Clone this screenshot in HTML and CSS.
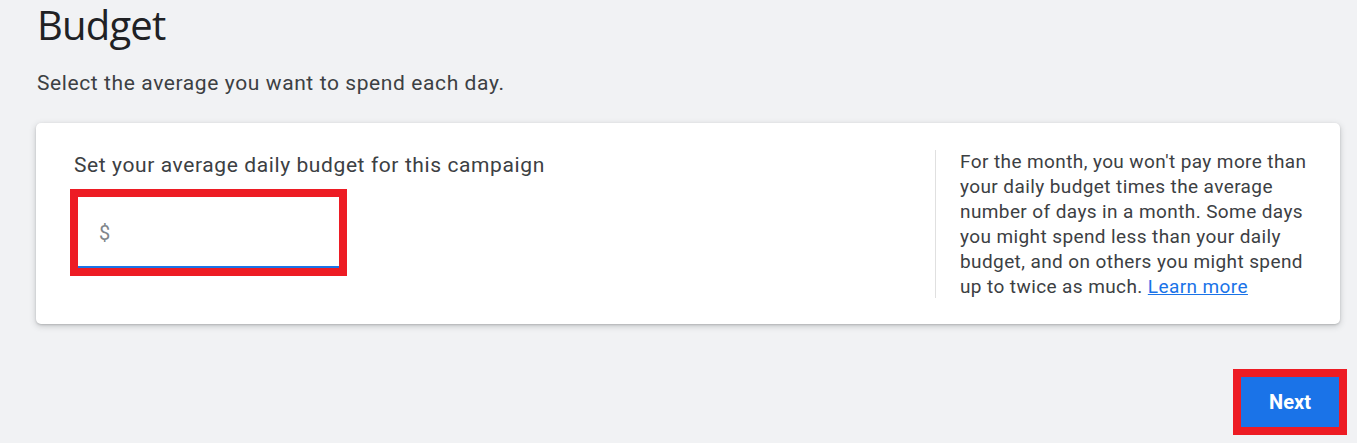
FILE: index.html
```html
<!DOCTYPE html>
<html>
<head>
<meta charset="utf-8">
<link rel="stylesheet" href="styles.css">
</head>
<body>
<main class="page">
  <h1 class="title">Budget</h1>
  <p class="subtitle">Select the average you want to spend each day.</p>
  <section class="card">
    <div class="card-main">
      <div class="field-label">Set your average daily budget for this campaign</div>
      <div class="highlight">
        <div class="money-input">
          <span class="currency">$</span>
        </div>
      </div>
    </div>
    <div class="card-side">
      <div class="divider"></div>
      <p class="help">For the month, you won't pay more than your daily budget times the average number of days in a month. Some days you might spend less than your daily budget, and on others you might spend up to twice as much. <a class="link" href="#">Learn more</a></p>
    </div>
  </section>
  <div class="actions">
    <div class="highlight btn-highlight">
      <button class="next-btn">Next</button>
    </div>
  </div>
</main>
</body>
</html>
```

FILE: styles.css
```css
html, body {
  margin: 0;
  padding: 0;
  background: #f1f2f4;
  font-family: Roboto, "Noto Sans", "Liberation Sans", sans-serif;
  color: #3c4043;
}
.page {
  width: 1357px;
  height: 443px;
  overflow: hidden;
  box-sizing: border-box;
  padding: 2px 17px 0 36px;
}
.title {
  margin: 0 0 0 1px;
  font-family: "Open Sans", Roboto, sans-serif;
  font-weight: 400;
  font-size: 40px;
  line-height: 46px;
  color: #202124;
  letter-spacing: -0.8px;
}
.subtitle {
  margin: 21px 0 0 1px;
  font-size: 21px;
  line-height: 28px;
  letter-spacing: 0.6px;
  color: #3c4043;
}
.card {
  margin-top: 26px;
  width: 1304px;
  height: 201px;
  box-sizing: border-box;
  background: #fff;
  border-radius: 5px;
  box-shadow: 0 2px 6px rgba(60, 64, 67, 0.25), 0 1px 2px rgba(60, 64, 67, 0.2);
  display: flex;
}
.card-main {
  flex: 1;
  padding: 28px 0 0 38px;
}
.field-label {
  font-size: 21px;
  line-height: 28px;
  letter-spacing: 0.6px;
  color: #3c4043;
}
.highlight {
  border: 8px solid #ed1c24;
  display: inline-block;
}
.card-main .highlight {
  margin-top: 10px;
  margin-left: -4px;
}
.money-input {
  width: 261px;
  height: 71px;
  box-sizing: border-box;
  border-bottom: 2px solid #1a73e8;
  display: flex;
  align-items: center;
  padding-left: 21px;
}
.currency {
  font-size: 20px;
  color: #80868b;
  margin-top: 2px;
}
.card-side {
  display: flex;
  padding: 27px 20px 0 0;
  width: 405px;
  box-sizing: border-box;
}
.divider {
  width: 1px;
  height: 148px;
  background: #e0e0e0;
  flex-shrink: 0;
}
.help {
  margin: -1px 0 0 24px;
  font-size: 19px;
  line-height: 25px;
  letter-spacing: 0.4px;
  color: #3c4043;
}
.link {
  color: #1a73e8;
  text-decoration: underline;
}
.actions {
  display: flex;
  justify-content: flex-end;
  margin-top: 45px;
}
.btn-highlight {
  margin-right: -7px;
}
.next-btn {
  display: block;
  width: 98px;
  height: 50px;
  border: none;
  background: #1a73e8;
  color: #fff;
  font-family: Roboto, "Noto Sans", sans-serif;
  font-weight: 700;
  font-size: 20px;
  padding: 0;
}
```
